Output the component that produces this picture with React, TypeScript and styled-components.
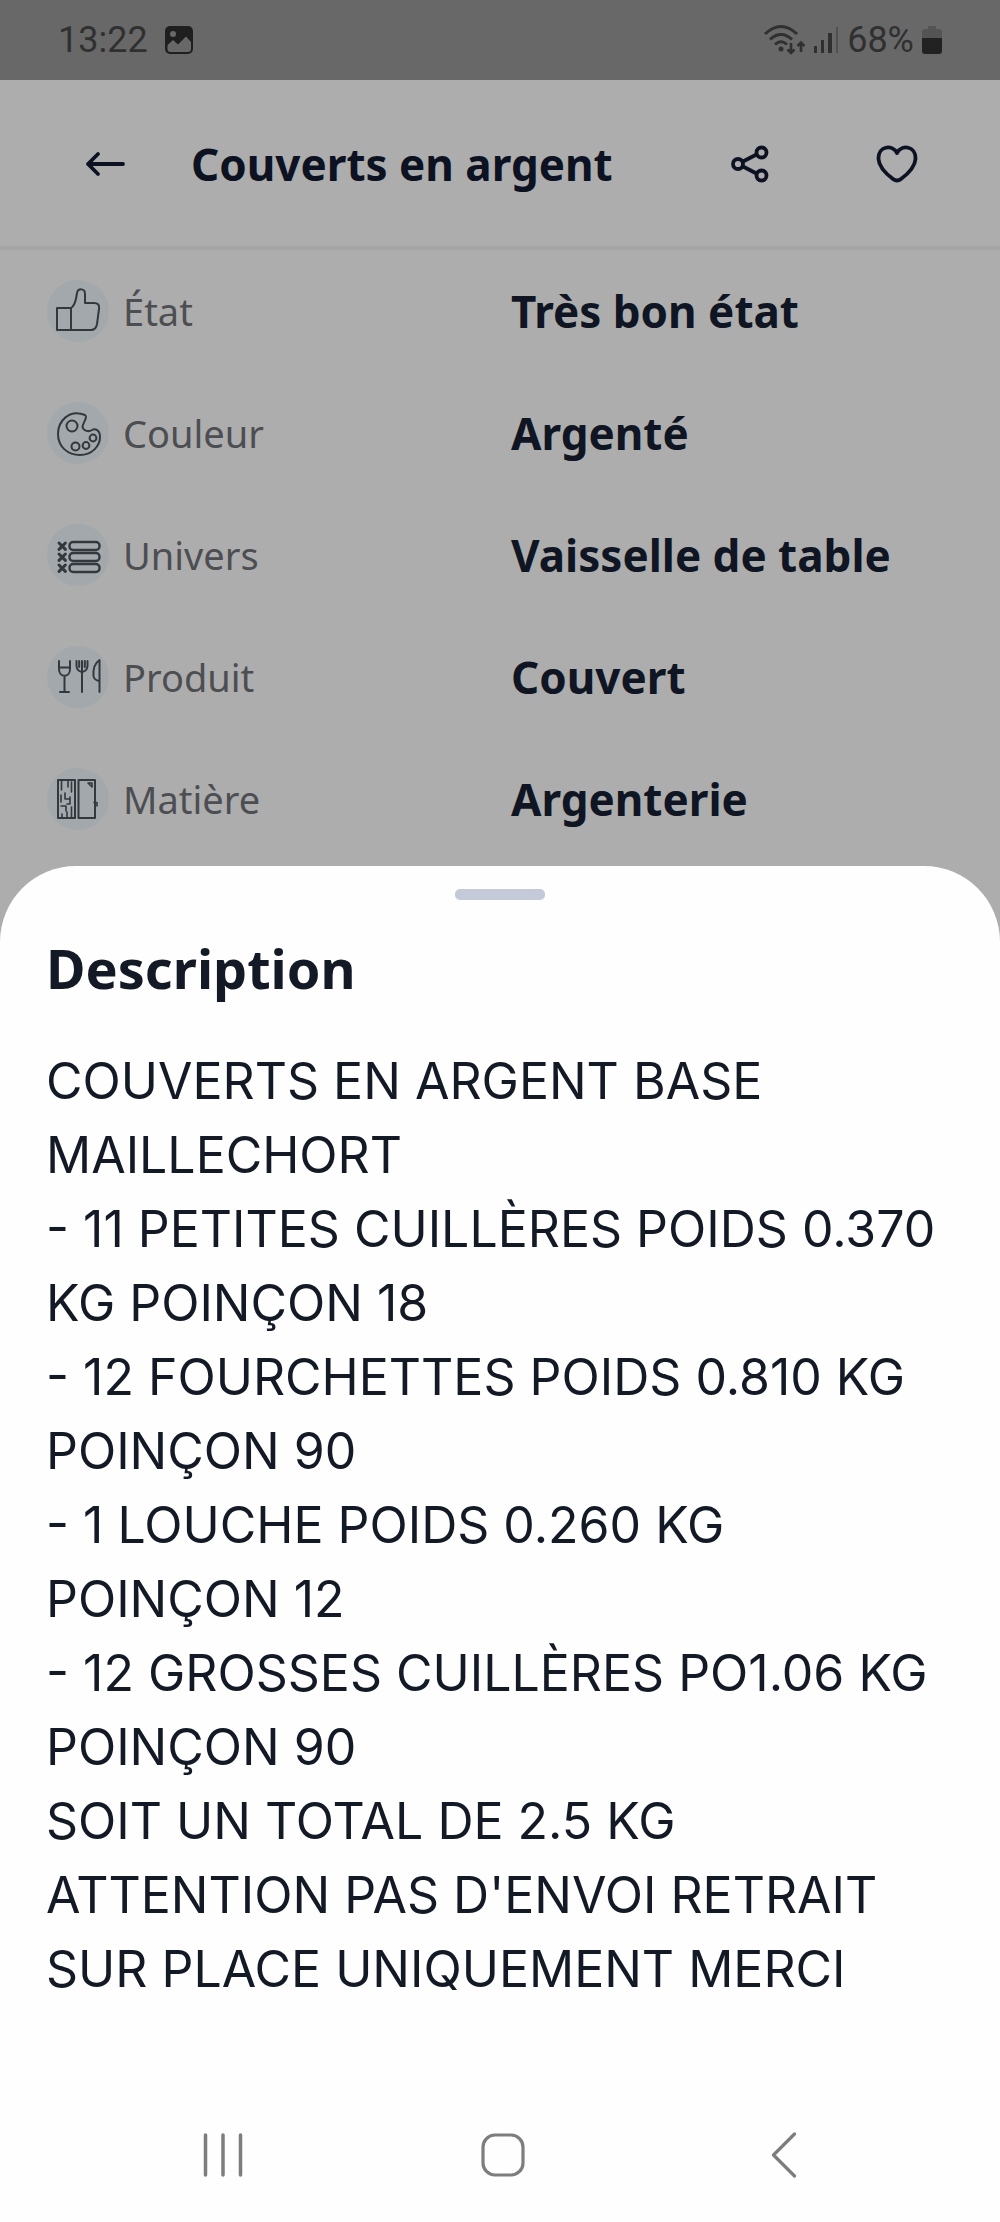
import React from 'react';
import styled, { createGlobalStyle } from 'styled-components';

const GlobalStyle = createGlobalStyle`
  * { box-sizing: border-box; }
  html, body { margin: 0; padding: 0; background: #adadad; }
  body { font-family: "Noto Sans", "Open Sans", sans-serif; color: #131a26; }
  h1, h2, p, dl, dt, dd { margin: 0; }
`;

const Screen = styled.div`
  display: flex;
  flex-direction: column;
  min-height: 100vh;
`;

const StatusBar = styled.div`
  display: flex;
  align-items: center;
  justify-content: space-between;
  height: 80px;
  padding: 0 58px;
  background: #686868;
  color: #303030;
  font-family: Roboto, sans-serif;
  font-size: 36px;
  line-height: 40px;
`;

const StatusGroup = styled.div<{ $gap: number }>`
  display: flex;
  align-items: center;
  gap: ${(p) => p.$gap}px;
`;

const Header = styled.header`
  display: flex;
  align-items: center;
  height: 170px;
  padding: 2px 71px 0 73px;
  border-bottom: 4px solid #a4a4a4;
  color: #0d1222;
`;

const Title = styled.h1`
  flex: 1;
  padding-left: 54px;
  font-size: 44px;
  line-height: 56px;
  font-weight: 700;
  white-space: nowrap;
`;

const IconButton = styled.button`
  display: grid;
  place-items: center;
  width: 64px;
  height: 64px;
  padding: 0;
  border: 0;
  background: none;
  color: inherit;
`;

const HeaderActions = styled.div`
  display: flex;
  gap: 83px;
`;

const Details = styled.dl`
  padding: 0 33px 6px 47px;
`;

const DetailRow = styled.div`
  display: grid;
  grid-template-columns: 1fr 1fr;
  align-items: center;
  height: 122px;
  column-gap: 8px;
`;

const Label = styled.dt`
  display: flex;
  align-items: center;
  gap: 14px;
  font-size: 38px;
  line-height: 56px;
  color: #4c4e52;
`;

const Value = styled.dd`
  font-size: 44px;
  line-height: 56px;
  font-weight: 700;
  color: #0f1523;
  white-space: nowrap;
`;

const IconDisc = styled.span`
  display: block;
  width: 62px;
  height: 62px;
  border-radius: 50%;
  background: #a3a8ac;
  color: #33383f;
`;

const Sheet = styled.section`
  display: flex;
  flex: 1;
  flex-direction: column;
  padding-top: 23px;
  border-radius: 76px 76px 0 0;
  background: #fefefe;
`;

const Handle = styled.div`
  align-self: center;
  width: 90px;
  height: 11px;
  border-radius: 5px;
  background: #c5cad9;
`;

const SheetBody = styled.div`
  flex: 1;
  padding: 34px 40px 0 46px;
`;

const SheetTitle = styled.h2`
  margin-bottom: 42px;
  font-size: 54px;
  line-height: 68px;
  font-weight: 700;
`;

const Paragraph = styled.p`
  font-family: Inter, "Noto Sans", sans-serif;
  font-size: 50px;
  line-height: 74px;
  white-space: pre-line;
`;

const NavBar = styled.nav`
  display: flex;
  height: 134px;
  padding: 0 76px 0 83px;
  color: #7d7d7d;
`;

const NavButton = styled.button`
  display: grid;
  flex: 1;
  place-items: center;
  padding: 0;
  border: 0;
  background: none;
  color: inherit;
`;

const DiscIcon = ({ children }: { children: React.ReactNode }) => (
  <IconDisc>
    <svg width="62" height="62" viewBox="0 0 62 62" fill="none" stroke="currentColor" strokeWidth="2" strokeLinecap="round" strokeLinejoin="round" aria-hidden="true">
      {children}
    </svg>
  </IconDisc>
);

const Thumb = () => (
  <DiscIcon>
    <path d="M10 28H24V50H10Z" />
    <path d="M24 28C29 25 29 18 30 13C31 8 38 8 38 14V23H47Q53 23 52 29L50 44Q49 50 44 50H24" />
  </DiscIcon>
);

const Palette = () => (
  <DiscIcon>
    <path d="M38 13C22 7 11 19 11 32C11 45 21 53 33 53C45 53 53 44 53 35C53 28 48 26 45 28C40 31 34 27 36 23C37 19 41 15 38 13Z" />
    <circle cx="25" cy="24" r="5.5" />
    <circle cx="46" cy="36" r="3.4" />
    <circle cx="39" cy="43.5" r="3.4" />
    <circle cx="28.5" cy="44.5" r="4" />
  </DiscIcon>
);

const Checklist = () => (
  <DiscIcon>
    {[22, 33, 44].map((y) => (
      <g key={y}>
        <rect x="22.5" y={y - 4} width="30" height="8" rx="3.5" strokeWidth="2.4" />
        <path d={`M12 ${y - 3}l6.4 6.4M18.4 ${y - 3}l-6.4 6.4`} strokeWidth="3" />
      </g>
    ))}
  </DiscIcon>
);

const Cutlery = () => (
  <DiscIcon>
    <path d="M12 15V23C12 32 23 32 23 23V15M12 21.5H23M17.5 30V46M13 46H22" />
    <path d="M29.5 15V20Q30 25 35 26Q40 25 40.5 20V15M35 15V46M32.2 15V21M37.8 15V21" />
    <path d="M52.5 46V14C48 17 46 23 46.5 30Q47 34 52 35" />
  </DiscIcon>
);

const Material = () => (
  <DiscIcon>
    <path d="M11 12H28V50H11ZM31.5 12H48V50H31.5Z" />
    <path d="M14.5 12V22M21 12V19M24.5 14V24M14 27V34M18 25V31H22M14 38H19V43M23 29V36H20M24.5 39V50M20 44V50M15 46V50M41 15H45V19ZM47 34.5H50V38" strokeWidth="1.6" />
  </DiscIcon>
);

const details = [
  { label: 'État', value: 'Très bon état', Icon: Thumb },
  { label: 'Couleur', value: 'Argenté', Icon: Palette },
  { label: 'Univers', value: 'Vaisselle de table', Icon: Checklist },
  { label: 'Produit', value: 'Couvert', Icon: Cutlery },
  { label: 'Matière', value: 'Argenterie', Icon: Material },
];

const description = `COUVERTS EN ARGENT BASE
MAILLECHORT
- 11 PETITES CUILLÈRES POIDS 0.370
KG POINÇON 18
- 12 FOURCHETTES POIDS 0.810 KG
POINÇON 90
- 1 LOUCHE POIDS 0.260 KG
POINÇON 12
- 12 GROSSES CUILLÈRES PO1.06 KG
POINÇON 90
SOIT UN TOTAL DE 2.5 KG
ATTENTION PAS D'ENVOI RETRAIT
SUR PLACE UNIQUEMENT MERCI`;

export default function App() {
  return (
    <Screen>
      <GlobalStyle />
      <StatusBar>
        <StatusGroup $gap={16}>
          <span>13:22</span>
          <svg width="30" height="30" viewBox="0 0 30 30" aria-hidden="true">
            <rect x="1" y="1" width="28" height="28" rx="5" fill="#1f1f1f" />
            <path d="M3.5 20L9 15L14 19.500L22 11.500L27 17V24Q27 27 24 27H6.500Q3.500 27 3.500 24Z" fill="#686868" />
            <circle cx="9" cy="9" r="3" fill="#686868" />
          </svg>
        </StatusGroup>
        <StatusGroup $gap={8}>
          <svg width="42" height="32" viewBox="0 0 42 32" fill="none" stroke="currentColor" strokeWidth="3" aria-hidden="true">
            <path d="M2 10Q18 -5 34 10M7 15.500Q18 5.500 29 15.500M12 20.500Q18 15 24 20.500" />
            <circle cx="18" cy="25" r="2.500" fill="currentColor" stroke="none" />
            <path d="M28 19V29M24.500 25.500L28 29L31.500 25.500M38 28V19M34.500 22L38 18.500L41.500 22" strokeWidth="2.600" />
          </svg>
          <svg width="26" height="28" viewBox="0 0 26 28" fill="currentColor" aria-hidden="true">
            <rect x="1" y="20" width="3" height="7" />
            <rect x="8" y="14" width="3" height="13" />
            <rect x="15" y="7" width="4" height="20" />
            <rect x="23" y="1" width="2" height="26" opacity="0.4" />
          </svg>
          <span>68%</span>
          <svg width="20" height="30" viewBox="0 0 20 30" aria-hidden="true">
            <path d="M6 1H14V4H17Q20 4 20 7V14H0V7Q0 4 3 4H6Z" fill="#545454" />
            <path d="M0 13H20V26Q20 29 17 29H3Q0 29 0 26Z" fill="#222" />
          </svg>
        </StatusGroup>
      </StatusBar>

      <Header>
        <IconButton type="button" aria-label="Retour">
          <svg width="40" height="28" viewBox="0 0 40 28" fill="none" stroke="currentColor" strokeWidth="3.8" strokeLinecap="round" strokeLinejoin="round">
            <path d="M38 14H3M13 4L3 14L13 24" />
          </svg>
        </IconButton>
        <Title>Couverts en argent</Title>
        <HeaderActions>
          <IconButton type="button" aria-label="Partager">
            <svg width="40" height="40" viewBox="0 0 40 40" fill="none" stroke="currentColor" strokeWidth="3.8">
              <circle cx="8" cy="20" r="5" />
              <circle cx="31.500" cy="8.500" r="5" />
              <circle cx="31.500" cy="31.500" r="5" />
              <path d="M13 17.500L26.500 10.500M13 22.500L26.500 29.500" />
            </svg>
          </IconButton>
          <IconButton type="button" aria-label="Ajouter aux favoris">
            <svg width="42" height="38" viewBox="0 0 42 38" fill="none" stroke="currentColor" strokeWidth="3.8" strokeLinecap="round" strokeLinejoin="round">
              <path d="M21 8C16 -1 2 1 2.500 14C3 22 9 28 17 34Q21 37 25 34C33 28 39 22 39.500 14C40 1 26 -1 21 8Z" />
            </svg>
          </IconButton>
        </HeaderActions>
      </Header>

      <Details>
        {details.map(({ label, value, Icon }) => (
          <DetailRow key={label}>
            <Label>
              <Icon />
              {label}
            </Label>
            <Value>{value}</Value>
          </DetailRow>
        ))}
      </Details>

      <Sheet>
        <Handle />
        <SheetBody>
          <SheetTitle>Description</SheetTitle>
          <Paragraph>{description}</Paragraph>
        </SheetBody>
        <NavBar>
          <NavButton type="button" aria-label="Applications récentes">
            <svg width="40" height="44" viewBox="0 0 40 44" stroke="currentColor" strokeWidth="3.500" strokeLinecap="round">
              <path d="M2.500 2V42M20 2V42M37.500 2V42" />
            </svg>
          </NavButton>
          <NavButton type="button" aria-label="Accueil">
            <svg width="44" height="44" viewBox="0 0 44 44" fill="none" stroke="currentColor" strokeWidth="3.200">
              <rect x="2" y="2" width="40" height="40" rx="12" />
            </svg>
          </NavButton>
          <NavButton type="button" aria-label="Précédent">
            <svg width="26" height="46" viewBox="0 0 26 46" fill="none" stroke="currentColor" strokeWidth="3.200" strokeLinecap="round" strokeLinejoin="round">
              <path d="M23.500 2L2.500 23L23.500 44" />
            </svg>
          </NavButton>
        </NavBar>
      </Sheet>
    </Screen>
  );
}
